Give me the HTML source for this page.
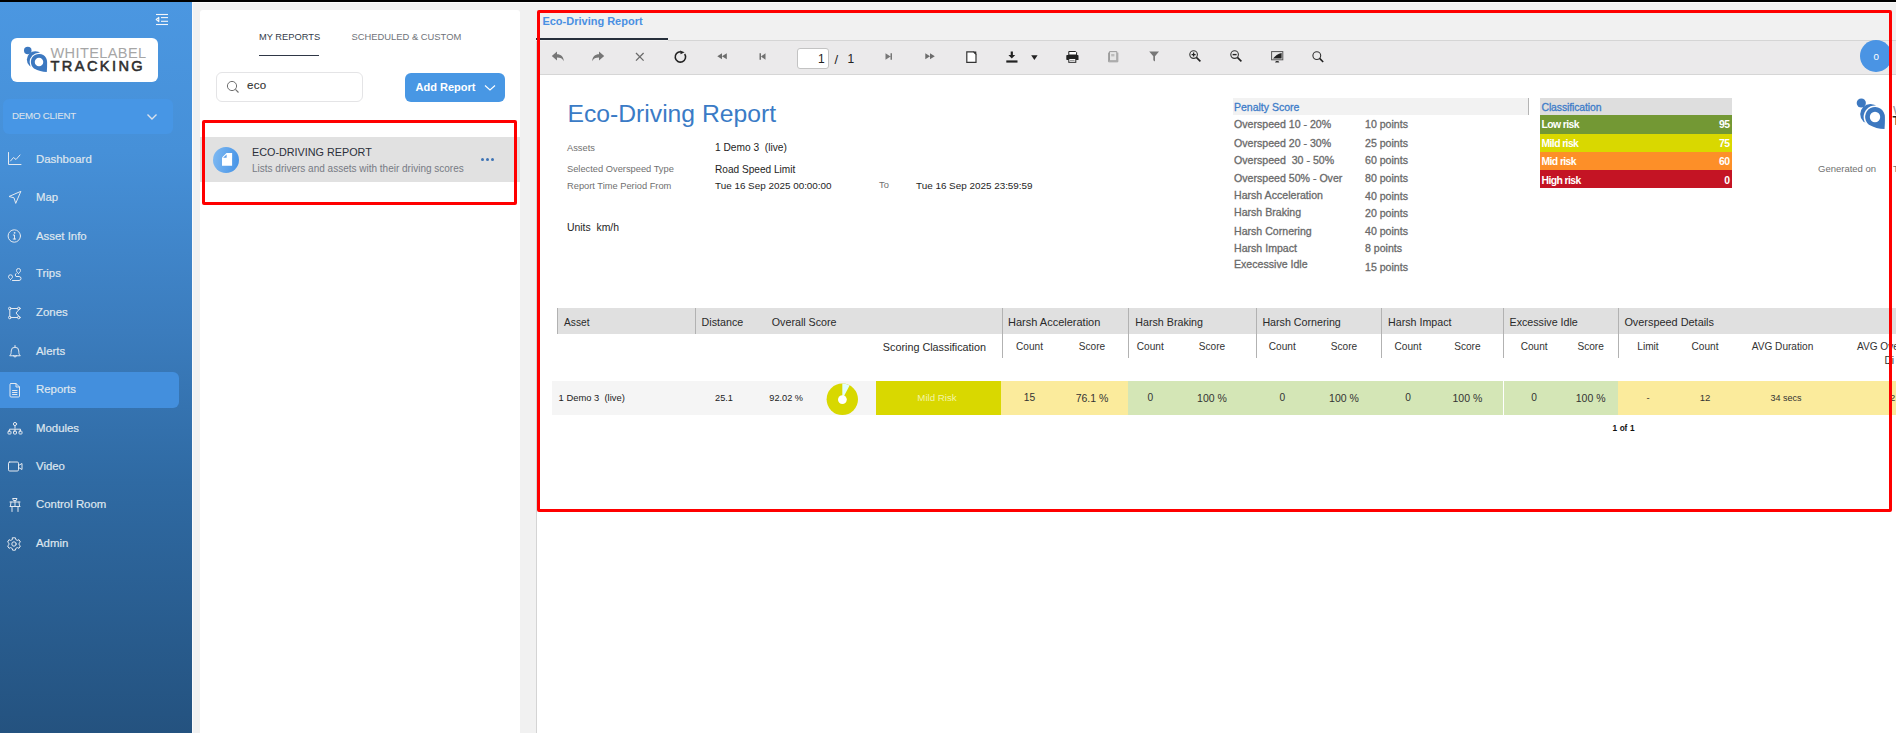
<!DOCTYPE html>
<html><head><meta charset="utf-8">
<style>
*{margin:0;padding:0;box-sizing:border-box}
html,body{width:1896px;height:733px;overflow:hidden;background:#f1f1f1;font-family:"Liberation Sans",sans-serif}
.a{position:absolute}
.t{position:absolute;white-space:nowrap;line-height:1}
svg{position:absolute;overflow:visible}
#topbar{left:0;top:0;width:1896px;height:2px;background:#000}
#topwhite{left:0;top:2px;width:1896px;height:1px;background:#fbfbfb}
#side{left:0;top:2px;width:192px;height:731px;background:linear-gradient(#4b97e1 0px,#4690d8 150px,#3b7cbd 330px,#2f6aa3 480px,#24527f 733px)}
#sideline{left:192px;top:2px;width:1px;height:731px;background:#fbfbfb}
#panel{left:200px;top:10px;width:320px;height:740px;background:#fff;border-radius:3px}
#report{left:536px;top:41px;width:1360px;height:700px;background:#fff;border-left:1px solid #d4d4d4}
.nav{color:#dfe6ef;font-size:11.4px;left:36px;font-weight:normal;-webkit-text-stroke:0.2px #dfe6ef}
.nico{stroke:#e4e9f0;fill:none;stroke-width:1;stroke-linecap:round;stroke-linejoin:round}
</style></head><body>
<div class="a" id="topbar"></div>
<div class="a" id="topwhite"></div>
<div class="a" id="side"></div>
<div class="a" id="sideline"></div>
<div class="a" id="panel"></div>
<div class="a" id="report"></div>

<!-- SIDEBAR -->
<svg width="14" height="12" style="left:155px;top:14px">
  <g stroke="#f4f6f9" stroke-width="1.1"><line x1="1" y1="0.5" x2="13" y2="0.5"/><line x1="6" y1="3.6" x2="13" y2="3.6"/><line x1="6" y1="7.3" x2="13" y2="7.3"/><line x1="1" y1="10.5" x2="13" y2="10.5"/></g>
  <path d="M3.8 3.3 L1.2 5.5 L3.8 7.7 Z" fill="none" stroke="#f4f6f9" stroke-width="1.1" stroke-linejoin="round"/>
</svg>
<div class="a" style="left:11px;top:38px;width:147px;height:44px;background:#fff;border-radius:6px"></div>
<svg width="60" height="60" style="left:8.700000000000003px;top:32.1px"><g transform="translate(30,30) scale(0.82)">
  <circle cx="-4.6" cy="-2.9" r="10.2" fill="#3c78c0"/>
  <circle r="11.4" fill="#fff"/>
  <path d="M9.9 0 C10 4.5 9.8 8.5 9.5 12.1 C4 12 -1 10.5 -6.1 7.8 A9.9 9.9 0 1 1 9.9 0 Z" fill="#3c78c0"/>
  <circle r="5.2" fill="#fff"/>
  <circle cx="-13.7" cy="-14" r="4.6" fill="#3c78c0"/>
</g></svg>
<div class="t" style="left:50.5px;top:46.3px;font-size:14.6px;color:#a6a6a6;letter-spacing:0.35px;font-weight:normal">WHITELABEL</div>
<div class="t" style="left:50.5px;top:59.2px;font-size:14.6px;color:#2e2e2e;letter-spacing:2.4px;-webkit-text-stroke:0.55px #2e2e2e">TRACKING</div>

<div class="a" style="left:3px;top:99px;width:170px;height:35px;background:#4796e5;border-radius:6px"></div>
<div class="t" style="left:12px;top:110.8px;font-size:9.7px;color:#dbe2ec;letter-spacing:-0.2px;-webkit-text-stroke:0.1px #dbe2ec">DEMO CLIENT</div>
<svg width="12" height="8" style="left:146px;top:113px"><path d="M1.5 1.5 L6 6 L10.5 1.5" stroke="#dbe2ec" stroke-width="1.4" fill="none"/></svg>

<div class="a" style="left:-6px;top:372px;width:185px;height:36px;background:#438fdd;border-radius:6px"></div>

<div class="t nav" style="top:153.6px">Dashboard</div>
<div class="t nav" style="top:191.8px">Map</div>
<div class="t nav" style="top:230.5px">Asset Info</div>
<div class="t nav" style="top:268.4px">Trips</div>
<div class="t nav" style="top:306.7px">Zones</div>
<div class="t nav" style="top:345.7px">Alerts</div>
<div class="t nav" style="top:383.6px">Reports</div>
<div class="t nav" style="top:422.6px">Modules</div>
<div class="t nav" style="top:461px">Video</div>
<div class="t nav" style="top:498.5px">Control Room</div>
<div class="t nav" style="top:537.9px">Admin</div>

<!-- nav icons -->
<svg width="16" height="16" style="left:7px;top:151px" class="nico">
  <path d="M1.5 1.5 V13.5 H14"/><path d="M3.5 10 L6.5 6.5 L9 8.5 L13 4"/>
</svg>
<svg width="16" height="16" style="left:7px;top:189px" class="nico">
  <path d="M13.5 2.5 L2 7.5 L7 8.8 L8.6 14 Z"/>
</svg>
<svg width="16" height="16" style="left:7px;top:228px" class="nico">
  <circle cx="7.3" cy="8" r="6.2"/><path d="M6.3 7 H7.5 V11 M6.2 11 H8.6"/><circle cx="7.4" cy="4.9" r="0.4"/>
</svg>
<svg width="16" height="16" style="left:7px;top:266px" class="nico">
  <path d="M3.5 13.5 C2.3 12.5 1.5 11.8 1.5 10.8 A2 2 0 0 1 5.5 10.8 C5.5 11.8 4.7 12.5 3.5 13.5 Z"/>
  <path d="M11.5 7.5 C10.3 6.5 9.5 5.6 9.5 4.5 A2 2 0 0 1 13.5 4.5 C13.5 5.6 12.7 6.5 11.5 7.5 Z"/>
  <path d="M5.5 14.5 H12 A2 2 0 0 0 12 10.5 H9 A2 2 0 0 1 9 7.5"/>
</svg>
<svg width="16" height="16" style="left:7px;top:305px" class="nico">
  <circle cx="2.8" cy="3.5" r="1.3"/><circle cx="11.8" cy="3.5" r="1.3"/><circle cx="2.8" cy="12.5" r="1.3"/><circle cx="11.8" cy="12.5" r="1.3"/>
  <path d="M4.1 3.5 H10.5 M2.8 4.8 V11.2 M4.1 12.5 H10.5 M11.8 4.8 L9 8 L11.8 11.2"/>
</svg>
<svg width="16" height="16" style="left:7px;top:344px" class="nico">
  <path d="M3 11.5 C4 10.5 4.2 9.5 4.2 7 A3.8 3.8 0 0 1 11.8 7 C11.8 9.5 12 10.5 13 11.5 Z"/><path d="M6.5 11.5 A1.5 1.5 0 0 0 9.5 11.5 M8 1.5 V3.2"/>
</svg>
<svg width="16" height="16" style="left:7px;top:382px" class="nico">
  <path d="M4 1.5 H9 L12.5 5 V14 A1 1 0 0 1 11.5 15 H4 A1 1 0 0 1 3 14 V2.5 A1 1 0 0 1 4 1.5 Z"/><path d="M9 1.5 V5 H12.5 M5.5 8.5 H10 M5.5 10.5 H10 M5.5 12.5 H10"/>
</svg>
<svg width="18" height="16" style="left:7px;top:421px" class="nico">
  <circle cx="8" cy="3" r="1.6"/><path d="M8 4.6 V7 M2.5 10 V8.2 H13.5 V10"/>
  <rect x="1" y="10.2" width="3" height="2.8" rx="0.6"/><rect x="6.5" y="10.2" width="3" height="2.8" rx="0.6"/><rect x="12" y="10.2" width="3" height="2.8" rx="0.6"/><path d="M8 8.2 V10.2"/>
</svg>
<svg width="18" height="16" style="left:7px;top:459px" class="nico">
  <rect x="1.5" y="3" width="10" height="9" rx="1.2"/><path d="M11.5 6.5 L15 4.5 V10.5 L11.5 8.5"/>
</svg>
<svg width="16" height="16" style="left:7px;top:497px" class="nico">
  <path d="M6 1.5 H10 L9.2 3.5 H6.8 Z M3 5 H13 M4 5 L3.5 9 M12 5 L12.5 9 M3 9.5 H13 M5 9.5 V14.5 M11 9.5 V14.5 M8 3.5 V9.5"/>
</svg>
<svg width="16" height="16" style="left:6px;top:536px" class="nico">
  <path d="M6.6 1.8 H9.4 L9.8 3.6 L11.3 4.4 L13 3.7 L14.4 6.1 L13 7.3 V8.7 L14.4 9.9 L13 12.3 L11.3 11.6 L9.8 12.4 L9.4 14.2 H6.6 L6.2 12.4 L4.7 11.6 L3 12.3 L1.6 9.9 L3 8.7 V7.3 L1.6 6.1 L3 3.7 L4.7 4.4 L6.2 3.6 Z"/><circle cx="8" cy="8" r="2.2"/>
</svg>

<!-- LEFT PANEL -->
<div class="t" style="left:259px;top:32.7px;font-size:9.3px;color:#343b49">MY REPORTS</div>
<div class="a" style="left:259px;top:54.5px;width:60px;height:1.6px;background:#2f3746"></div>
<div class="t" style="left:351.5px;top:32.2px;font-size:9.4px;color:#6f7379">SCHEDULED &amp; CUSTOM</div>
<div class="a" style="left:216px;top:72px;width:147px;height:30px;border:1px solid #e4e4e6;border-radius:6px;background:#fff"></div>
<svg width="14" height="14" style="left:226px;top:80px">
  <circle cx="6" cy="6" r="4.6" stroke="#707070" stroke-width="1" fill="none"/><path d="M9.4 9.4 L12.5 12.5" stroke="#707070" stroke-width="1.1"/>
</svg>
<div class="t" style="left:247px;top:80.2px;font-size:11.5px;color:#333;letter-spacing:0.3px;-webkit-text-stroke:0.15px #333">eco</div>
<div class="a" style="left:405px;top:73px;width:100px;height:29px;background:#4897e4;border-radius:6px"></div>
<div class="t" style="left:415.5px;top:82px;font-size:11px;color:#fff;font-weight:bold">Add Report</div>
<svg width="12" height="8" style="left:484px;top:84px"><path d="M1 1.5 L6 6 L11 1.5" stroke="#fff" stroke-width="1.1" fill="none"/></svg>

<div class="a" style="left:200px;top:137px;width:320px;height:45px;background:#e1e1e1"></div>
<div class="a" style="left:213px;top:147px;width:26px;height:26px;border-radius:50%;background:linear-gradient(100deg,#80baf2,#4492e6)"></div>
<svg width="12" height="14" style="left:221.5px;top:153.1px"><path d="M4.5 0 H10.1 V12.8 H0 V4.4 Z" fill="#fff"/><path d="M4.6 1.6 L1.1 4.7 H4.6 Z" fill="#5e9fe9"/></svg>
<div class="t" style="left:252px;top:146.6px;font-size:10.8px;color:#2b2f3a">ECO-DRIVING REPORT</div>
<div class="t" style="left:252px;top:163.7px;font-size:10px;color:#777b84">Lists drivers and assets with their driving scores</div>
<div class="a" style="left:481px;top:157.8px;width:3.4px;height:3.4px;border-radius:50%;background:#3e73b4"></div>
<div class="a" style="left:485.8px;top:157.8px;width:3.4px;height:3.4px;border-radius:50%;background:#3e73b4"></div>
<div class="a" style="left:490.6px;top:157.8px;width:3.4px;height:3.4px;border-radius:50%;background:#3e73b4"></div>
<div class="a" style="left:202px;top:120px;width:315px;height:85px;border:3px solid #ff0000;border-radius:2px"></div>

<!-- REPORT -->
<div class="t" style="left:542.4px;top:15.5px;font-size:11px;color:#4a90e2;font-weight:bold">Eco-Driving Report</div>
<div class="a" style="left:536px;top:38px;width:132px;height:2px;background:#27303c"></div>
<div class="a" style="left:668px;top:40px;width:1228px;height:1px;background:#d5d5d5"></div>
<div class="a" style="left:537px;top:41px;width:1359px;height:33px;background:#ebeaeb"></div>
<div class="a" style="left:537px;top:74px;width:1359px;height:1px;background:#d6d6d6"></div>

<!-- toolbar icons -->
<svg width="14" height="12" style="left:551px;top:51px"><path d="M0.8 5 L6 0.6 V3.2 C10 3.2 12.6 5.5 12.8 10.2 C11.5 7.5 9.5 6.6 6 6.6 V9.4 Z" fill="#767676"/></svg>
<svg width="14" height="12" style="left:592px;top:51px"><path d="M12.2 5 L7 0.6 V3.2 C3 3.2 0.4 5.5 0.2 10.2 C1.5 7.5 3.5 6.6 7 6.6 V9.4 Z" fill="#767676"/></svg>
<svg width="10" height="10" style="left:634.5px;top:51.5px"><path d="M1 1 L8.6 8.6 M8.6 1 L1 8.6" stroke="#6a6a6a" stroke-width="1.3"/></svg>
<svg width="14" height="14" style="left:674px;top:50px"><path d="M10.66 3.92 A5.2 5.2 0 1 1 6.6 1.7" stroke="#222" stroke-width="1.6" fill="none"/><path d="M6 0.4 L10.6 2.2 L6.6 4.2 Z" fill="#222"/></svg>
<svg width="12" height="8" style="left:716.5px;top:53px"><path d="M0.3 3.2 L5 0.2 V6.2 Z M5 3.2 L9.8 0.2 V6.2 Z" fill="#6c6c6c"/></svg>
<svg width="8" height="8" style="left:758.5px;top:52.8px"><path d="M0.5 0.2 H2 V6.8 H0.5 Z M6.5 0.2 V6.8 L2 3.5 Z" fill="#707070"/></svg>
<div class="a" style="left:797px;top:48px;width:32px;height:21px;background:#fff;border:1px solid #c3c3c3;border-radius:3px"></div>
<div class="t" style="left:818px;top:52.8px;font-size:12px;color:#222">1</div>
<div class="t" style="left:834.5px;top:52.6px;font-size:13px;color:#222">/</div>
<div class="t" style="left:847.5px;top:52.8px;font-size:12px;color:#222">1</div>
<svg width="8" height="8" style="left:885px;top:52.8px"><path d="M5.5 0.2 H7 V6.8 H5.5 Z M0.5 0.2 V6.8 L5.5 3.5 Z" fill="#777"/></svg>
<svg width="12" height="8" style="left:924.5px;top:53px"><path d="M0.3 0.2 L5 3.2 L0.3 6.2 Z M5 0.2 L9.8 3.2 L5 6.2 Z" fill="#6c6c6c"/></svg>
<svg width="12" height="13" style="left:965.5px;top:50.5px"><path d="M0.8 0.8 H7.5 L10 3.3 V11.3 H0.8 Z" stroke="#333" stroke-width="1.2" fill="#fff"/><path d="M7 0.5 L10.3 3.8 V0.5 Z" fill="#333"/></svg>
<svg width="13" height="12" style="left:1005.5px;top:50.5px"><path d="M4.7 0.5 H6.9 V4 H9.2 L5.8 7.4 L2.4 4 H4.7 Z" fill="#222"/><rect x="0.3" y="9.4" width="11.2" height="2.2" fill="#222"/></svg>
<svg width="8" height="6" style="left:1030.8px;top:54.6px"><path d="M0.2 0.2 H6.6 L3.4 5 Z" fill="#222"/></svg>
<svg width="14" height="13" style="left:1065.5px;top:50.5px"><path d="M2.8 0.5 H9.6 L10.6 1.5 V4 H2.8 Z" fill="#fff" stroke="#222" stroke-width="1"/><path d="M1 4 H11.7 A0.8 0.8 0 0 1 12.5 4.8 V9 H1 A0.8 0.8 0 0 1 0.3 8.2 V4.8 A0.8 0.8 0 0 1 1 4 Z" fill="#222"/><rect x="2.8" y="7.5" width="7" height="3.8" fill="#fff" stroke="#222" stroke-width="1"/><path d="M4 9.4 H8.6" stroke="#777" stroke-width="0.8"/></svg>
<svg width="12" height="12" style="left:1107.5px;top:50.8px"><path d="M1.5 0.6 H8.8 V9.8 H1.5 Z" stroke="#9c9c9c" stroke-width="1" fill="#e6e6e6"/><path d="M0.6 1.6 V10.8 H9.8 V1.6" stroke="#9c9c9c" stroke-width="1" fill="none"/><rect x="3.2" y="3" width="3.2" height="2.4" fill="#bcbcbc"/></svg>
<svg width="11" height="11" style="left:1148.8px;top:51px"><path d="M0.2 0.5 H10 L6 5.2 V10.4 L4.3 9.2 V5.2 Z" fill="#777"/></svg>
<svg width="13" height="13" style="left:1188.5px;top:50.3px"><circle cx="4.6" cy="4.6" r="3.8" stroke="#333" stroke-width="1.1" fill="none"/><path d="M2.6 4.6 H6.6 M4.6 2.6 V6.6" stroke="#222" stroke-width="1.3"/><path d="M7.4 7.4 L11.4 11.4" stroke="#222" stroke-width="1.6"/></svg>
<svg width="13" height="13" style="left:1229.5px;top:50.3px"><circle cx="4.6" cy="4.6" r="3.8" stroke="#333" stroke-width="1.1" fill="none"/><path d="M2.6 4.6 H6.6" stroke="#222" stroke-width="1.4"/><path d="M7.4 7.4 L11.4 11.4" stroke="#222" stroke-width="1.6"/></svg>
<svg width="14" height="13" style="left:1270.8px;top:50.6px"><rect x="0.6" y="0.6" width="11.2" height="8.2" stroke="#555" stroke-width="1" fill="#e8e8e8"/><path d="M2 7.6 C4 5 7 2.8 10.6 2 V7.6 Z" fill="#222"/><path d="M4 11.6 H8.4 L7.4 10 H5 Z" fill="#333"/></svg>
<svg width="13" height="13" style="left:1311.5px;top:50.5px"><circle cx="4.8" cy="4.6" r="3.9" stroke="#333" stroke-width="1.1" fill="none"/><path d="M7.6 7.4 L11.2 11" stroke="#222" stroke-width="1.6"/></svg>
<div class="a" style="left:1859.8px;top:40.1px;width:31.8px;height:31.8px;border-radius:50%;background:#4a94e4"></div>
<div class="t" style="left:1873.5px;top:51.6px;font-size:9.8px;color:#fff">0</div>

<!-- report body -->
<div class="t" style="left:567.5px;top:101.6px;font-size:24.7px;color:#3a7bc6">Eco-Driving Report</div>
<div class="t" style="left:567px;top:143.9px;font-size:9.3px;color:#707070">Assets</div>
<div class="t" style="left:567px;top:165.1px;font-size:9.3px;color:#707070">Selected Overspeed Type</div>
<div class="t" style="left:567px;top:181.6px;font-size:9.3px;color:#707070">Report Time Period From</div>
<div class="t" style="left:715px;top:143.3px;font-size:10.2px;color:#1e1e1e;white-space:pre">1 Demo 3  (live)</div>
<div class="t" style="left:715px;top:165px;font-size:10.1px;color:#1e1e1e">Road Speed Limit</div>
<div class="t" style="left:715px;top:180.6px;font-size:9.9px;color:#1e1e1e">Tue 16 Sep 2025 00:00:00</div>
<div class="t" style="left:879px;top:180.9px;font-size:9.3px;color:#707070">To</div>
<div class="t" style="left:916px;top:180.6px;font-size:9.9px;color:#1e1e1e">Tue 16 Sep 2025 23:59:59</div>
<div class="t" style="left:567px;top:223.1px;font-size:10.4px;color:#1e1e1e;white-space:pre">Units  km/h</div>

<div class="a" style="left:1233px;top:98px;width:296px;height:17px;background:#f2f2f2;border-right:1px solid #b4b4b4"></div>
<div class="t" style="left:1234px;top:102.2px;font-size:10.5px;color:#3d7cc9;-webkit-text-stroke:0.3px #3d7cc9">Penalty Score</div>

<div class="t" style="left:1234.0px;top:119.4px;font-size:10.6px;color:#6a6a6a;white-space:pre;-webkit-text-stroke:0.3px #6a6a6a">Overspeed 10 - 20%</div>
<div class="t" style="left:1365.0px;top:119.4px;font-size:10.6px;color:#6a6a6a;white-space:pre;-webkit-text-stroke:0.3px #6a6a6a">10 points</div>
<div class="t" style="left:1234.0px;top:137.5px;font-size:10.6px;color:#6a6a6a;white-space:pre;-webkit-text-stroke:0.3px #6a6a6a">Overspeed 20 - 30%</div>
<div class="t" style="left:1365.0px;top:137.5px;font-size:10.6px;color:#6a6a6a;white-space:pre;-webkit-text-stroke:0.3px #6a6a6a">25 points</div>
<div class="t" style="left:1234.0px;top:154.9px;font-size:10.6px;color:#6a6a6a;white-space:pre;-webkit-text-stroke:0.3px #6a6a6a">Overspeed  30 - 50%</div>
<div class="t" style="left:1365.0px;top:154.9px;font-size:10.6px;color:#6a6a6a;white-space:pre;-webkit-text-stroke:0.3px #6a6a6a">60 points</div>
<div class="t" style="left:1234.0px;top:172.5px;font-size:10.6px;color:#6a6a6a;white-space:pre;-webkit-text-stroke:0.3px #6a6a6a">Overspeed 50% - Over</div>
<div class="t" style="left:1365.0px;top:172.5px;font-size:10.6px;color:#6a6a6a;white-space:pre;-webkit-text-stroke:0.3px #6a6a6a">80 points</div>
<div class="t" style="left:1234.0px;top:190.3px;font-size:10.6px;color:#6a6a6a;white-space:pre;-webkit-text-stroke:0.3px #6a6a6a">Harsh Acceleration</div>
<div class="t" style="left:1365.0px;top:191.1px;font-size:10.6px;color:#6a6a6a;white-space:pre;-webkit-text-stroke:0.3px #6a6a6a">40 points</div>
<div class="t" style="left:1234.0px;top:207.2px;font-size:10.6px;color:#6a6a6a;white-space:pre;-webkit-text-stroke:0.3px #6a6a6a">Harsh Braking</div>
<div class="t" style="left:1365.0px;top:207.9px;font-size:10.6px;color:#6a6a6a;white-space:pre;-webkit-text-stroke:0.3px #6a6a6a">20 points</div>
<div class="t" style="left:1234.0px;top:225.6px;font-size:10.6px;color:#6a6a6a;white-space:pre;-webkit-text-stroke:0.3px #6a6a6a">Harsh Cornering</div>
<div class="t" style="left:1365.0px;top:226.1px;font-size:10.6px;color:#6a6a6a;white-space:pre;-webkit-text-stroke:0.3px #6a6a6a">40 points</div>
<div class="t" style="left:1234.0px;top:242.9px;font-size:10.6px;color:#6a6a6a;white-space:pre;-webkit-text-stroke:0.3px #6a6a6a">Harsh Impact</div>
<div class="t" style="left:1365.0px;top:242.9px;font-size:10.6px;color:#6a6a6a;white-space:pre;-webkit-text-stroke:0.3px #6a6a6a">8 points</div>
<div class="t" style="left:1234.0px;top:258.9px;font-size:10.6px;color:#6a6a6a;white-space:pre;-webkit-text-stroke:0.3px #6a6a6a">Execessive Idle</div>
<div class="t" style="left:1365.0px;top:262.4px;font-size:10.6px;color:#6a6a6a;white-space:pre;-webkit-text-stroke:0.3px #6a6a6a">15 points</div>

<div class="a" style="left:1540px;top:98px;width:192px;height:17px;background:#dedede"></div>
<div class="a" style="left:1540px;top:115px;width:192px;height:19px;background:#739834"></div>
<div class="a" style="left:1540px;top:134px;width:192px;height:18px;background:#d9d800"></div>
<div class="a" style="left:1540px;top:152px;width:192px;height:18px;background:#fd8f28"></div>
<div class="a" style="left:1540px;top:170px;width:192px;height:18px;background:#c41424"></div>
<div class="t" style="left:1541.5px;top:103px;font-size:10.4px;color:#3d7cc9;letter-spacing:-0.1px;-webkit-text-stroke:0.3px #3d7cc9">Classification</div>

<div class="t" style="left:1541.5px;top:119.8px;font-size:10.4px;color:#fff;white-space:pre;font-weight:bold;letter-spacing:-0.6px">Low risk</div>
<div class="t" style="left:1429.5px;width:300px;text-align:right;top:119.8px;font-size:10.4px;color:#fff;white-space:pre;font-weight:bold;letter-spacing:-0.5px">95</div>
<div class="t" style="left:1541.5px;top:139.3px;font-size:10.4px;color:#fff;white-space:pre;font-weight:bold;letter-spacing:-0.6px">Mild risk</div>
<div class="t" style="left:1429.5px;width:300px;text-align:right;top:139.3px;font-size:10.4px;color:#fff;white-space:pre;font-weight:bold;letter-spacing:-0.5px">75</div>
<div class="t" style="left:1541.5px;top:157.2px;font-size:10.4px;color:#fff;white-space:pre;font-weight:bold;letter-spacing:-0.6px">Mid risk</div>
<div class="t" style="left:1429.5px;width:300px;text-align:right;top:157.2px;font-size:10.4px;color:#fff;white-space:pre;font-weight:bold;letter-spacing:-0.5px">60</div>
<div class="t" style="left:1541.5px;top:175.7px;font-size:10.4px;color:#fff;white-space:pre;font-weight:bold;letter-spacing:-0.6px">High risk</div>
<div class="t" style="left:1429.5px;width:300px;text-align:right;top:175.7px;font-size:10.4px;color:#fff;white-space:pre;font-weight:bold;letter-spacing:-0.5px">0</div>

<svg width="60" height="60" style="left:1844.9px;top:86.6px"><g transform="translate(30,30) scale(1.0)">
  <circle cx="-4.6" cy="-2.9" r="10.2" fill="#3c78c0"/>
  <circle r="11.4" fill="#fff"/>
  <path d="M9.9 0 C10 4.5 9.8 8.5 9.5 12.1 C4 12 -1 10.5 -6.1 7.8 A9.9 9.9 0 1 1 9.9 0 Z" fill="#3c78c0"/>
  <circle r="5.2" fill="#fff"/>
  <circle cx="-13.7" cy="-14" r="4.6" fill="#3c78c0"/>
</g></svg>
<div class="t" style="left:1818px;top:163.9px;font-size:9.5px;color:#707070">Generated on</div>
<div class="t" style="left:1893px;top:163.9px;font-size:9.5px;color:#707070">T</div>
<div class="t" style="left:1893px;top:104px;font-size:13px;color:#999">W</div>
<div class="t" style="left:1892.5px;top:114px;font-size:13px;color:#222;font-weight:bold">T</div>

<!-- table -->
<div class="a" style="left:557px;top:308px;width:1339px;height:26px;background:#e0e0e0"></div>

<div class="t" style="left:564.0px;top:317.7px;font-size:10.2px;color:#2a2a2a;white-space:pre;">Asset</div>
<div class="t" style="left:701.6px;top:317.0px;font-size:10.7px;color:#2a2a2a;white-space:pre;">Distance</div>
<div class="t" style="left:771.8px;top:317.0px;font-size:10.7px;color:#2a2a2a;white-space:pre;">Overall Score</div>
<div class="t" style="left:1008.0px;top:316.9px;font-size:11px;color:#2a2a2a;white-space:pre;">Harsh Acceleration</div>
<div class="t" style="left:1135.3px;top:317.0px;font-size:10.7px;color:#2a2a2a;white-space:pre;">Harsh Braking</div>
<div class="t" style="left:1262.4px;top:317.0px;font-size:10.7px;color:#2a2a2a;white-space:pre;">Harsh Cornering</div>
<div class="t" style="left:1388.0px;top:317.0px;font-size:10.7px;color:#2a2a2a;white-space:pre;">Harsh Impact</div>
<div class="t" style="left:1509.5px;top:317.0px;font-size:10.7px;color:#2a2a2a;white-space:pre;">Excessive Idle</div>
<div class="t" style="left:1624.4px;top:316.9px;font-size:10.9px;color:#2a2a2a;white-space:pre;">Overspeed Details</div>
<div class="a" style="left:557px;top:308px;width:1px;height:26px;background:#b2b2b2"></div>
<div class="a" style="left:695px;top:308px;width:1px;height:26px;background:#b2b2b2"></div>
<div class="a" style="left:1002px;top:308px;width:1px;height:50px;background:#b2b2b2"></div>
<div class="a" style="left:1128px;top:308px;width:1px;height:50px;background:#b2b2b2"></div>
<div class="a" style="left:1256px;top:308px;width:1px;height:50px;background:#b2b2b2"></div>
<div class="a" style="left:1381px;top:308px;width:1px;height:50px;background:#b2b2b2"></div>
<div class="a" style="left:1503px;top:308px;width:1px;height:50px;background:#b2b2b2"></div>
<div class="a" style="left:1618px;top:308px;width:1px;height:50px;background:#b2b2b2"></div>
<div class="t" style="left:882.8px;top:341.8px;font-size:10.8px;color:#2a2a2a;white-space:pre;">Scoring Classification</div>
<div class="t" style="left:929.5px;width:200px;text-align:center;top:342.1px;font-size:10.1px;color:#333;white-space:pre;">Count</div>
<div class="t" style="left:992.0px;width:200px;text-align:center;top:342.1px;font-size:10.1px;color:#333;white-space:pre;">Score</div>
<div class="t" style="left:1050.3px;width:200px;text-align:center;top:342.1px;font-size:10.1px;color:#333;white-space:pre;">Count</div>
<div class="t" style="left:1112.0px;width:200px;text-align:center;top:342.1px;font-size:10.1px;color:#333;white-space:pre;">Score</div>
<div class="t" style="left:1182.3px;width:200px;text-align:center;top:342.1px;font-size:10.1px;color:#333;white-space:pre;">Count</div>
<div class="t" style="left:1244.0px;width:200px;text-align:center;top:342.1px;font-size:10.1px;color:#333;white-space:pre;">Score</div>
<div class="t" style="left:1308.0px;width:200px;text-align:center;top:342.1px;font-size:10.1px;color:#333;white-space:pre;">Count</div>
<div class="t" style="left:1367.4px;width:200px;text-align:center;top:342.1px;font-size:10.1px;color:#333;white-space:pre;">Score</div>
<div class="t" style="left:1434.2px;width:200px;text-align:center;top:342.1px;font-size:10.1px;color:#333;white-space:pre;">Count</div>
<div class="t" style="left:1490.6px;width:200px;text-align:center;top:342.1px;font-size:10.1px;color:#333;white-space:pre;">Score</div>
<div class="t" style="left:1548.0px;width:200px;text-align:center;top:342.1px;font-size:10.1px;color:#333;white-space:pre;">Limit</div>
<div class="t" style="left:1605.0px;width:200px;text-align:center;top:342.1px;font-size:10.1px;color:#333;white-space:pre;">Count</div>
<div class="t" style="left:1682.5px;width:200px;text-align:center;top:342.1px;font-size:10.1px;color:#333;white-space:pre;">AVG Duration</div>
<div class="t" style="left:1857.0px;top:342.1px;font-size:10.1px;color:#333;white-space:pre;">AVG Over</div>
<div class="t" style="left:1884.5px;top:355.6px;font-size:10.1px;color:#333;white-space:pre;">Di</div>

<div class="a" style="left:552px;top:381px;width:324px;height:34px;background:#f5f5f5"></div>
<svg width="34" height="34" style="left:825px;top:382px">
  <circle cx="17.3" cy="17.3" r="15.7" fill="#d8d800"/>
  <path d="M17.3 17.3 L17.3 1.6 A15.7 15.7 0 0 1 24.6 3.4 Z" fill="#e2fefd"/>
  <circle cx="17.4" cy="17.6" r="4.4" fill="#fff"/>
</svg>
<div class="a" style="left:876px;top:381px;width:125px;height:34px;background:#d9d800"></div>
<div class="a" style="left:1001px;top:381px;width:127px;height:34px;background:#fbeb9c"></div>
<div class="a" style="left:1128px;top:381px;width:375px;height:34px;background:#d4e6b6"></div>
<div class="a" style="left:1504px;top:381px;width:114px;height:34px;background:#d4e6b6"></div>
<div class="a" style="left:1618px;top:381px;width:278px;height:34px;background:#fbeb9c"></div>

<div class="t" style="left:558.6px;top:392.9px;font-size:9.4px;color:#222;white-space:pre;">1 Demo 3  (live)</div>
<div class="t" style="left:624.0px;width:200px;text-align:center;top:393.6px;font-size:9.2px;color:#222;white-space:pre;">25.1</div>
<div class="t" style="left:769.3px;top:393.6px;font-size:9.2px;color:#222;white-space:pre;">92.02 %</div>
<div class="t" style="left:837.0px;width:200px;text-align:center;top:393.3px;font-size:9.7px;color:#f4f4a6;white-space:pre;">Mild Risk</div>
<div class="t" style="left:929.5px;width:200px;text-align:center;top:392.5px;font-size:10.2px;color:#333;white-space:pre;">15</div>
<div class="t" style="left:1050.3px;width:200px;text-align:center;top:392.5px;font-size:10.2px;color:#333;white-space:pre;">0</div>
<div class="t" style="left:1182.3px;width:200px;text-align:center;top:392.5px;font-size:10.2px;color:#333;white-space:pre;">0</div>
<div class="t" style="left:1308.0px;width:200px;text-align:center;top:392.5px;font-size:10.2px;color:#333;white-space:pre;">0</div>
<div class="t" style="left:1434.2px;width:200px;text-align:center;top:392.5px;font-size:10.2px;color:#333;white-space:pre;">0</div>
<div class="t" style="left:992.0px;width:200px;text-align:center;top:392.8px;font-size:10.5px;color:#333;white-space:pre;">76.1 %</div>
<div class="t" style="left:1112.0px;width:200px;text-align:center;top:392.8px;font-size:10.5px;color:#333;white-space:pre;">100 %</div>
<div class="t" style="left:1244.0px;width:200px;text-align:center;top:392.8px;font-size:10.5px;color:#333;white-space:pre;">100 %</div>
<div class="t" style="left:1367.4px;width:200px;text-align:center;top:392.8px;font-size:10.5px;color:#333;white-space:pre;">100 %</div>
<div class="t" style="left:1490.6px;width:200px;text-align:center;top:392.8px;font-size:10.5px;color:#333;white-space:pre;">100 %</div>
<div class="t" style="left:1548.0px;width:200px;text-align:center;top:393.2px;font-size:9.5px;color:#333;white-space:pre;">-</div>
<div class="t" style="left:1605.0px;width:200px;text-align:center;top:393.2px;font-size:9.6px;color:#333;white-space:pre;">12</div>
<div class="t" style="left:1686.0px;width:200px;text-align:center;top:393.5px;font-size:9.0px;color:#333;white-space:pre;">34 secs</div>
<div class="t" style="left:1890.0px;top:393.4px;font-size:9.5px;color:#333;white-space:pre;">2</div>
<div class="t" style="left:1612.4px;top:423.5px;font-size:8.3px;color:#111;white-space:pre;font-weight:bold;letter-spacing:-0.2px;word-spacing:0.8px">1 of 1</div>

<div class="a" style="left:537px;top:10px;width:355px;height:502px;border:3px solid #ff0000;border-radius:2px;width:1355px"></div>

</body></html>
